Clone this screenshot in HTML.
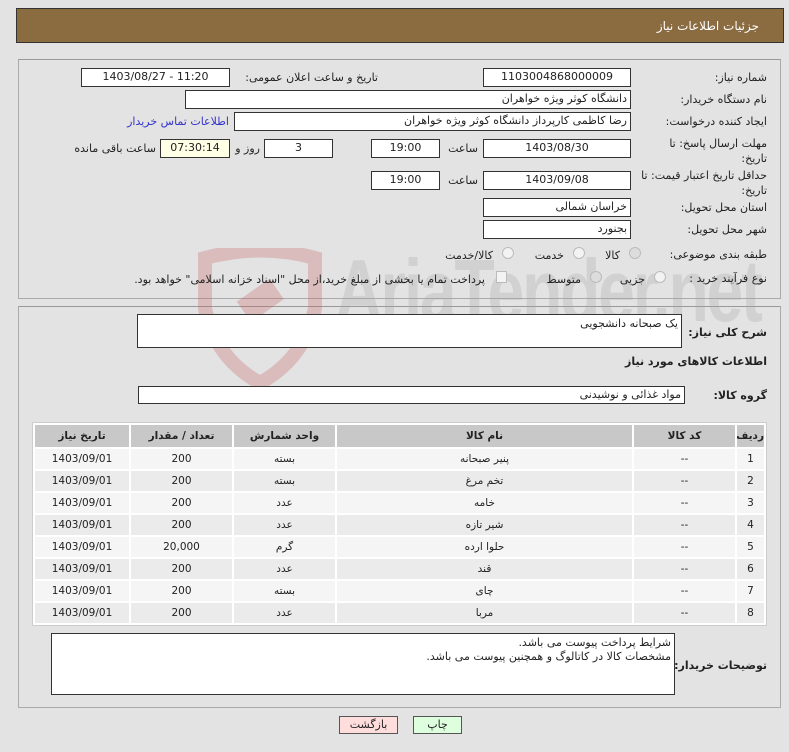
<!DOCTYPE html>
<html><head><meta charset="utf-8"><style>
*{box-sizing:border-box;margin:0;padding:0}
body{width:789px;height:752px;background:#e3e3e3;font-family:"DejaVu Sans","Liberation Sans",sans-serif;font-size:11px;color:#222;position:relative;overflow:hidden}
.a{position:absolute;white-space:nowrap}
.in{position:absolute;background:#fff;border:1px solid #333;direction:rtl;padding:0 3px;line-height:16px;white-space:nowrap;font-size:11px}
.c{text-align:center}
.l{position:absolute;direction:rtl;text-align:right;white-space:nowrap;font-size:11px}
.b{font-weight:bold;font-size:11px}
.panel{position:absolute;border:1px solid #aaa;border-top-color:#999}
table{position:absolute;left:32px;top:422px;width:735px;border-collapse:separate;border-spacing:2px;border:1px solid #ccc;direction:rtl;background:#fff;table-layout:fixed}
td,th{height:20px;text-align:center;font-size:10.5px;overflow:hidden;white-space:nowrap}
th{background:#c8c8c8;height:22px;font-weight:bold}
tr:nth-child(even) td{background:#f5f5f5}
tr:nth-child(odd) td{background:#ebebeb}
.rad{position:absolute;width:12px;height:12px;border-radius:50%;border:1px solid #bbb;background:#f3f3f3}
</style></head><body>
<div class="a" style="left:16px;top:8px;width:768px;height:35px;background:#8b6b40;border:1px solid #333"></div>
<div class="l" style="right:30px;top:19px;color:#fff;font-size:12px">جزئیات اطلاعات نیاز</div>

<div class="panel" style="left:18px;top:59px;width:763px;height:240px"></div>
<div class="panel" style="left:18px;top:306px;width:763px;height:402px"></div>

<svg class="a" style="left:195px;top:248px" width="130" height="140" viewBox="0 0 130 140"><path d="M10 10 Q65 -5 120 10 L120 60 Q110 110 65 135 Q20 110 10 60 Z" fill="none" stroke="rgba(200,100,100,0.3)" stroke-width="14"/><rect x="45" y="40" width="40" height="25" transform="rotate(-35 65 52)" fill="rgba(200,100,100,0.3)"/></svg>
<div class="a" style="left:335px;top:240px;font-size:88px;font-weight:bold;color:rgba(160,160,160,0.28);font-family:'Liberation Sans',sans-serif;letter-spacing:-3px;transform:scaleX(0.75);transform-origin:left">AriaTender.net</div>

<div class="l" style="right:22px;top:71px">شماره نیاز:</div>
<div class="in c" style="left:483px;top:68px;width:148px;height:19px;direction:ltr">1103004868000009</div>
<div class="l" style="right:411px;top:71px">تاریخ و ساعت اعلان عمومی:</div>
<div class="in c" style="left:81px;top:68px;width:149px;height:19px;direction:ltr">1403/08/27 - 11:20</div>

<div class="l" style="right:22px;top:93px">نام دستگاه خریدار:</div>
<div class="in" style="left:185px;top:90px;width:446px;height:19px">دانشگاه کوثر ویژه خواهران</div>

<div class="l" style="right:22px;top:115px">ایجاد کننده درخواست:</div>
<div class="in" style="left:234px;top:112px;width:397px;height:19px">رضا کاظمی کارپرداز دانشگاه کوثر ویژه خواهران</div>
<div class="l" style="right:560px;top:115px;color:#33c">اطلاعات تماس خریدار</div>

<div class="l" style="right:22px;top:136px;line-height:15px">مهلت ارسال پاسخ: تا<br>تاریخ:</div>
<div class="in c" style="left:483px;top:139px;width:148px;height:19px">1403/08/30</div>
<div class="l" style="right:311px;top:142px">ساعت</div>
<div class="in c" style="left:371px;top:139px;width:69px;height:19px">19:00</div>
<div class="in c" style="left:264px;top:139px;width:69px;height:19px">3</div>
<div class="l" style="right:529px;top:142px">روز و</div>
<div class="in c" style="left:160px;top:139px;width:70px;height:19px;background:#ffffe6">07:30:14</div>
<div class="l" style="right:633px;top:142px">ساعت باقی مانده</div>

<div class="l" style="right:22px;top:168px;line-height:15px">حداقل تاریخ اعتبار قیمت: تا<br>تاریخ:</div>
<div class="in c" style="left:483px;top:171px;width:148px;height:19px">1403/09/08</div>
<div class="l" style="right:311px;top:174px">ساعت</div>
<div class="in c" style="left:371px;top:171px;width:69px;height:19px">19:00</div>

<div class="l" style="right:22px;top:201px">استان محل تحویل:</div>
<div class="in" style="left:483px;top:198px;width:148px;height:19px">خراسان شمالی</div>
<div class="l" style="right:22px;top:223px">شهر محل تحویل:</div>
<div class="in" style="left:483px;top:220px;width:148px;height:19px">بجنورد</div>

<div class="l" style="right:22px;top:248px">طبقه بندی موضوعی:</div>
<div class="rad" style="left:629px;top:247px;background:#ddd"></div>
<div class="l" style="right:169px;top:249px">کالا</div>
<div class="rad" style="left:573px;top:247px"></div>
<div class="l" style="right:225px;top:249px">خدمت</div>
<div class="rad" style="left:502px;top:247px"></div>
<div class="l" style="right:296px;top:249px">کالا/خدمت</div>

<div class="l" style="right:22px;top:272px">نوع فرآیند خرید :</div>
<div class="rad" style="left:654px;top:271px"></div>
<div class="l" style="right:144px;top:273px">جزیی</div>
<div class="rad" style="left:590px;top:271px;background:#ddd"></div>
<div class="l" style="right:208px;top:273px">متوسط</div>
<div class="a" style="left:496px;top:271px;width:11px;height:12px;border:1px solid #bbb;background:#f3f3f3"></div>
<div class="l" style="right:304px;top:273px">پرداخت تمام یا بخشی از مبلغ خرید،از محل "اسناد خزانه اسلامی" خواهد بود.</div>

<div class="l b" style="right:22px;top:326px">شرح کلی نیاز:</div>
<div class="in" style="left:137px;top:314px;width:545px;height:34px;line-height:18px">یک صبحانه دانشجویی</div>
<div class="l b" style="right:22px;top:355px">اطلاعات کالاهای مورد نیاز</div>
<div class="l b" style="right:22px;top:389px">گروه کالا:</div>
<div class="in" style="left:138px;top:386px;width:547px;height:18px">مواد غذائی و نوشیدنی</div>

<table>
<colgroup><col style="width:27px"><col style="width:101px"><col style="width:295px"><col style="width:101px"><col style="width:101px"><col></colgroup>
<tr><th>ردیف</th><th>کد کالا</th><th>نام کالا</th><th>واحد شمارش</th><th>تعداد / مقدار</th><th>تاریخ نیاز</th></tr>
<tr><td>1</td><td>--</td><td>پنیر صبحانه</td><td>بسته</td><td>200</td><td>1403/09/01</td></tr>
<tr><td>2</td><td>--</td><td>تخم مرغ</td><td>بسته</td><td>200</td><td>1403/09/01</td></tr>
<tr><td>3</td><td>--</td><td>خامه</td><td>عدد</td><td>200</td><td>1403/09/01</td></tr>
<tr><td>4</td><td>--</td><td>شیر تازه</td><td>عدد</td><td>200</td><td>1403/09/01</td></tr>
<tr><td>5</td><td>--</td><td>حلوا ارده</td><td>گرم</td><td>20,000</td><td>1403/09/01</td></tr>
<tr><td>6</td><td>--</td><td>قند</td><td>عدد</td><td>200</td><td>1403/09/01</td></tr>
<tr><td>7</td><td>--</td><td>چای</td><td>بسته</td><td>200</td><td>1403/09/01</td></tr>
<tr><td>8</td><td>--</td><td>مربا</td><td>عدد</td><td>200</td><td>1403/09/01</td></tr>
</table>

<div class="l b" style="right:22px;top:659px">توضیحات خریدار:</div>
<div class="in" style="left:51px;top:633px;width:624px;height:62px;line-height:14px;padding-top:2px">شرایط پرداخت پیوست می باشد.<br>مشخصات کالا در کاتالوگ و همچنین پیوست می باشد.</div>

<div class="a c" style="left:339px;top:716px;width:59px;height:18px;background:#fdd;border:1px solid #555;line-height:16px">بازگشت</div>
<div class="a c" style="left:413px;top:716px;width:49px;height:18px;background:#dfd;border:1px solid #555;line-height:16px">چاپ</div>
</body></html>
